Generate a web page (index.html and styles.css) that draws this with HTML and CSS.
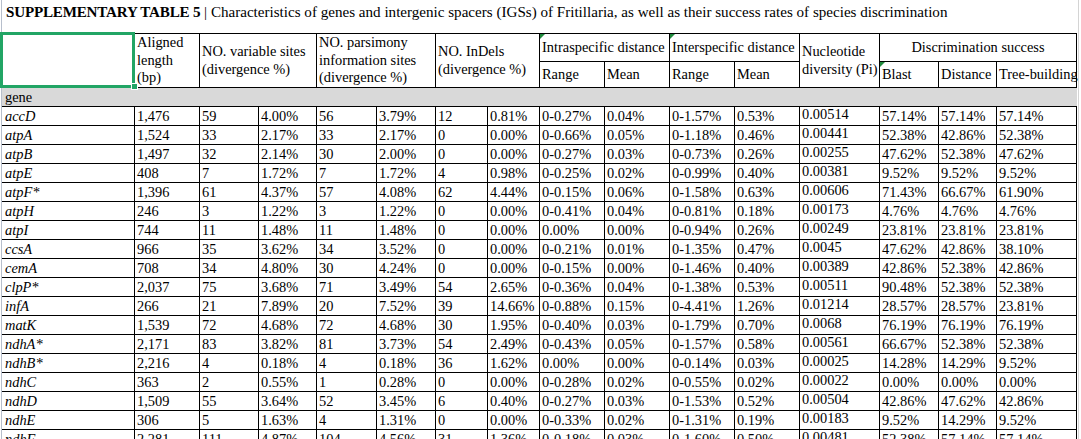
FILE: index.html
```html
<!DOCTYPE html>
<html>
<head>
<meta charset="utf-8">
<link rel="stylesheet" href="styles.css">
</head>
<body>
<div class="sheet">
  <div class="title"><b>SUPPLEMENTARY TABLE 5</b> | Characteristics of genes and intergenic spacers (IGSs) of Fritillaria, as well as their success rates of species discrimination</div>
  <div class="grid">
    <div class="c top r2 corner"></div>
    <div class="c top r2 hd hd-top"><span>Aligned<br>length<br>(bp)</span></div>
    <div class="c top r2 s2 hd"><span>NO. variable sites<br>(divergence %)</span></div>
    <div class="c top r2 s2 hd hd-top"><span>NO. parsimony<br>information sites<br>(divergence %)</span></div>
    <div class="c top r2 s2 hd"><span>NO. InDels<br>(divergence %)</span></div>
    <div class="c top s2 hd note"><span>Intraspecific distance</span></div>
    <div class="c top s2 hd note"><span>Interspecific distance</span></div>
    <div class="c top r2 hd hd-pi"><span>Nucleotide<br>diversity (Pi)</span></div>
    <div class="c top s3 hd center"><span>Discrimination success</span></div>
    <div class="c hd"><span>Range</span></div>
    <div class="c hd"><span>Mean</span></div>
    <div class="c hd"><span>Range</span></div>
    <div class="c hd"><span>Mean</span></div>
    <div class="c hd note"><span>Blast</span></div>
    <div class="c hd"><span>Distance</span></div>
    <div class="c hd"><span>Tree-building</span></div>

    <div class="section">gene</div>

    <div class="c g">accD</div><div class="c">1,476</div><div class="c">59</div><div class="c">4.00%</div><div class="c">56</div><div class="c">3.79%</div><div class="c">12</div><div class="c">0.81%</div><div class="c rg">0-0.27%</div><div class="c">0.04%</div><div class="c rg">0-1.57%</div><div class="c">0.53%</div><div class="c pi">0.00514</div><div class="c">57.14%</div><div class="c">57.14%</div><div class="c">57.14%</div>
    <div class="c g">atpA</div><div class="c">1,524</div><div class="c">33</div><div class="c">2.17%</div><div class="c">33</div><div class="c">2.17%</div><div class="c">0</div><div class="c">0.00%</div><div class="c rg">0-0.66%</div><div class="c">0.05%</div><div class="c rg">0-1.18%</div><div class="c">0.46%</div><div class="c pi">0.00441</div><div class="c">52.38%</div><div class="c">42.86%</div><div class="c">52.38%</div>
    <div class="c g">atpB</div><div class="c">1,497</div><div class="c">32</div><div class="c">2.14%</div><div class="c">30</div><div class="c">2.00%</div><div class="c">0</div><div class="c">0.00%</div><div class="c rg">0-0.27%</div><div class="c">0.03%</div><div class="c rg">0-0.73%</div><div class="c">0.26%</div><div class="c pi">0.00255</div><div class="c">47.62%</div><div class="c">52.38%</div><div class="c">47.62%</div>
    <div class="c g">atpE</div><div class="c">408</div><div class="c">7</div><div class="c">1.72%</div><div class="c">7</div><div class="c">1.72%</div><div class="c">4</div><div class="c">0.98%</div><div class="c rg">0-0.25%</div><div class="c">0.02%</div><div class="c rg">0-0.99%</div><div class="c">0.40%</div><div class="c pi">0.00381</div><div class="c">9.52%</div><div class="c">9.52%</div><div class="c">9.52%</div>
    <div class="c g">atpF*</div><div class="c">1,396</div><div class="c">61</div><div class="c">4.37%</div><div class="c">57</div><div class="c">4.08%</div><div class="c">62</div><div class="c">4.44%</div><div class="c rg">0-0.15%</div><div class="c">0.06%</div><div class="c rg">0-1.58%</div><div class="c">0.63%</div><div class="c pi">0.00606</div><div class="c">71.43%</div><div class="c">66.67%</div><div class="c">61.90%</div>
    <div class="c g">atpH</div><div class="c">246</div><div class="c">3</div><div class="c">1.22%</div><div class="c">3</div><div class="c">1.22%</div><div class="c">0</div><div class="c">0.00%</div><div class="c rg">0-0.41%</div><div class="c">0.04%</div><div class="c rg">0-0.81%</div><div class="c">0.18%</div><div class="c pi">0.00173</div><div class="c">4.76%</div><div class="c">4.76%</div><div class="c">4.76%</div>
    <div class="c g">atpI</div><div class="c">744</div><div class="c">11</div><div class="c">1.48%</div><div class="c">11</div><div class="c">1.48%</div><div class="c">0</div><div class="c">0.00%</div><div class="c rg">0.00%</div><div class="c">0.00%</div><div class="c rg">0-0.94%</div><div class="c">0.26%</div><div class="c pi">0.00249</div><div class="c">23.81%</div><div class="c">23.81%</div><div class="c">23.81%</div>
    <div class="c g">ccsA</div><div class="c">966</div><div class="c">35</div><div class="c">3.62%</div><div class="c">34</div><div class="c">3.52%</div><div class="c">0</div><div class="c">0.00%</div><div class="c rg">0-0.21%</div><div class="c">0.01%</div><div class="c rg">0-1.35%</div><div class="c">0.47%</div><div class="c pi">0.0045</div><div class="c">47.62%</div><div class="c">42.86%</div><div class="c">38.10%</div>
    <div class="c g">cemA</div><div class="c">708</div><div class="c">34</div><div class="c">4.80%</div><div class="c">30</div><div class="c">4.24%</div><div class="c">0</div><div class="c">0.00%</div><div class="c rg">0-0.15%</div><div class="c">0.00%</div><div class="c rg">0-1.46%</div><div class="c">0.40%</div><div class="c pi">0.00389</div><div class="c">42.86%</div><div class="c">52.38%</div><div class="c">42.86%</div>
    <div class="c g">clpP*</div><div class="c">2,037</div><div class="c">75</div><div class="c">3.68%</div><div class="c">71</div><div class="c">3.49%</div><div class="c">54</div><div class="c">2.65%</div><div class="c rg">0-0.36%</div><div class="c">0.04%</div><div class="c rg">0-1.38%</div><div class="c">0.53%</div><div class="c pi">0.00511</div><div class="c">90.48%</div><div class="c">52.38%</div><div class="c">52.38%</div>
    <div class="c g">infA</div><div class="c">266</div><div class="c">21</div><div class="c">7.89%</div><div class="c">20</div><div class="c">7.52%</div><div class="c">39</div><div class="c">14.66%</div><div class="c rg">0-0.88%</div><div class="c">0.15%</div><div class="c rg">0-4.41%</div><div class="c">1.26%</div><div class="c pi">0.01214</div><div class="c">28.57%</div><div class="c">28.57%</div><div class="c">23.81%</div>
    <div class="c g">matK</div><div class="c">1,539</div><div class="c">72</div><div class="c">4.68%</div><div class="c">72</div><div class="c">4.68%</div><div class="c">30</div><div class="c">1.95%</div><div class="c rg">0-0.40%</div><div class="c">0.03%</div><div class="c rg">0-1.79%</div><div class="c">0.70%</div><div class="c pi">0.0068</div><div class="c">76.19%</div><div class="c">76.19%</div><div class="c">76.19%</div>
    <div class="c g">ndhA*</div><div class="c">2,171</div><div class="c">83</div><div class="c">3.82%</div><div class="c">81</div><div class="c">3.73%</div><div class="c">54</div><div class="c">2.49%</div><div class="c rg">0-0.43%</div><div class="c">0.05%</div><div class="c rg">0-1.57%</div><div class="c">0.58%</div><div class="c pi">0.00561</div><div class="c">66.67%</div><div class="c">52.38%</div><div class="c">52.38%</div>
    <div class="c g">ndhB*</div><div class="c">2,216</div><div class="c">4</div><div class="c">0.18%</div><div class="c">4</div><div class="c">0.18%</div><div class="c">36</div><div class="c">1.62%</div><div class="c rg">0.00%</div><div class="c">0.00%</div><div class="c rg">0-0.14%</div><div class="c">0.03%</div><div class="c pi">0.00025</div><div class="c">14.28%</div><div class="c">14.29%</div><div class="c">9.52%</div>
    <div class="c g">ndhC</div><div class="c">363</div><div class="c">2</div><div class="c">0.55%</div><div class="c">1</div><div class="c">0.28%</div><div class="c">0</div><div class="c">0.00%</div><div class="c rg">0-0.28%</div><div class="c">0.02%</div><div class="c rg">0-0.55%</div><div class="c">0.02%</div><div class="c pi">0.00022</div><div class="c">0.00%</div><div class="c">0.00%</div><div class="c">0.00%</div>
    <div class="c g">ndhD</div><div class="c">1,509</div><div class="c">55</div><div class="c">3.64%</div><div class="c">52</div><div class="c">3.45%</div><div class="c">6</div><div class="c">0.40%</div><div class="c rg">0-0.27%</div><div class="c">0.03%</div><div class="c rg">0-1.53%</div><div class="c">0.52%</div><div class="c pi">0.00504</div><div class="c">42.86%</div><div class="c">47.62%</div><div class="c">42.86%</div>
    <div class="c g">ndhE</div><div class="c">306</div><div class="c">5</div><div class="c">1.63%</div><div class="c">4</div><div class="c">1.31%</div><div class="c">0</div><div class="c">0.00%</div><div class="c rg">0-0.33%</div><div class="c">0.02%</div><div class="c rg">0-1.31%</div><div class="c">0.19%</div><div class="c pi">0.00183</div><div class="c">9.52%</div><div class="c">14.29%</div><div class="c">9.52%</div>
    <div class="c g">ndhF</div><div class="c">2,281</div><div class="c">111</div><div class="c">4.87%</div><div class="c">104</div><div class="c">4.56%</div><div class="c">31</div><div class="c">1.36%</div><div class="c rg">0-0.18%</div><div class="c">0.03%</div><div class="c rg">0-1.60%</div><div class="c">0.50%</div><div class="c pi">0.00481</div><div class="c">52.38%</div><div class="c">57.14%</div><div class="c">57.14%</div>
  </div>
</div>
</body>
</html>
```

FILE: styles.css
```css
html, body {
  margin: 0;
  padding: 0;
  background: #ffffff;
}
body {
  font-family: "Liberation Serif", "Times New Roman", serif;
  font-size: 14.4px;
  color: #000;
  overflow: hidden;
}
.sheet {
  margin-left: 1px;
  width: 1076px;
  min-height: 460px;
  border-left: 1px solid #b7bfcc;
  border-right: 1px solid #d4d4d4;
}
.title {
  height: 33px;
  box-sizing: border-box;
  padding: 2px 0 0 4px;
  line-height: 20px;
  font-size: 15.1px;
  white-space: nowrap;
}
.title b {
  letter-spacing: -0.2px;
}
.grid {
  display: grid;
  width: 1075px;
  grid-template-columns: 133px 65px 59px 58px 60px 59px 52px 52px 65px 65px 65px 65px 80px 59px 58px 80px;
  grid-template-rows: 29px 26px 19px;
  grid-auto-rows: 19px;
}
.c {
  box-sizing: border-box;
  border-right: 1px solid #000;
  border-bottom: 1px solid #000;
  padding: 0 0 0 2px;
  line-height: 18px;
  white-space: nowrap;
  position: relative;
}
.top {
  border-top: 1px solid #000;
}
.r2 { grid-row: span 2; }
.s2 { grid-column: span 2; }
.s3 { grid-column: span 3; }
.hd {
  display: flex;
  align-items: center;
  line-height: 17.5px;
}
.center {
  justify-content: center;
  padding-left: 0;
}
.g {
  font-style: italic;
  padding-left: 3px;
}
.pi {
  line-height: 14px;
  padding-bottom: 4px;
}
.section {
  grid-column: 1 / -1;
  background: #d9d9d9;
  border-bottom: 1px solid #000;
  padding-left: 3px;
  line-height: 18px;
}
.corner::after {
  content: "";
  position: absolute;
  left: -2px;
  top: -2px;
  width: 135px;
  height: 56px;
  box-sizing: border-box;
  border: 3px solid #22a565;
}
.corner::before {
  content: "";
  position: absolute;
  right: -4px;
  bottom: -3px;
  width: 5px;
  height: 5px;
  background: #22a565;
  border: 1px solid #fff;
  z-index: 2;
}
.note::before {
  content: "";
  position: absolute;
  left: 0;
  top: 0;
  width: 0;
  height: 0;
  border-top: 5px solid #1f8a3c;
  border-right: 5px solid transparent;
}
```
